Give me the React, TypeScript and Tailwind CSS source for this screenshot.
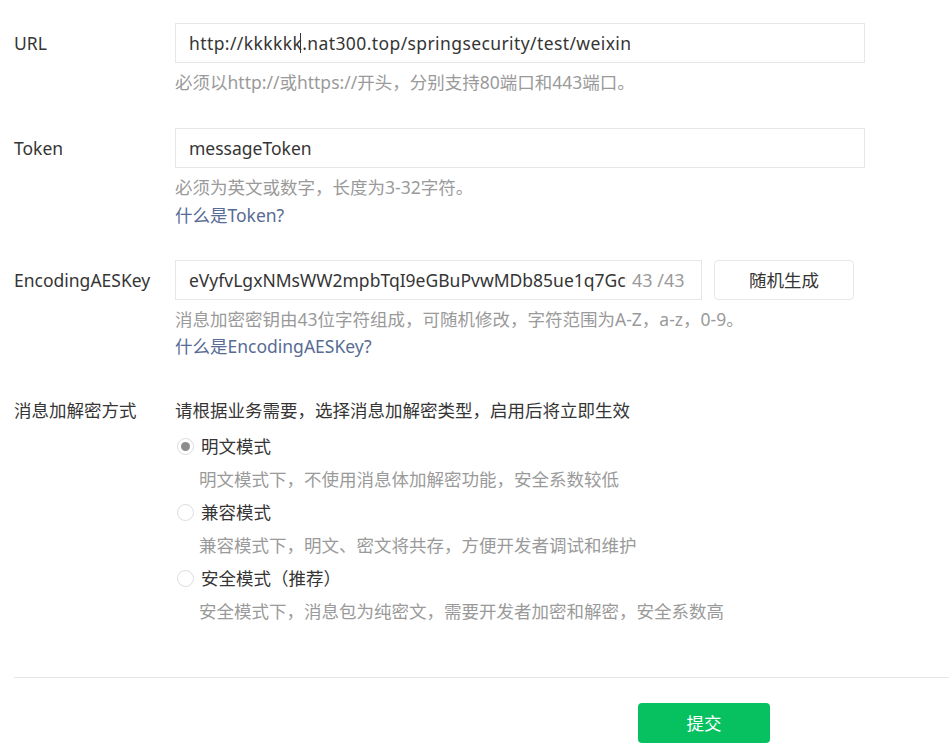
import React from "react";

const FONT = {
  fontFamily: '"Noto Sans", "Noto Sans CJK SC", sans-serif',
};

type Mode = {
  id: string;
  label: string;
  desc: string;
};

const modes: Mode[] = [
  {
    id: "plain",
    label: "明文模式",
    desc: "明文模式下，不使用消息体加解密功能，安全系数较低",
  },
  {
    id: "compat",
    label: "兼容模式",
    desc: "兼容模式下，明文、密文将共存，方便开发者调试和维护",
  },
  {
    id: "safe",
    label: "安全模式（推荐）",
    desc: "安全模式下，消息包为纯密文，需要开发者加密和解密，安全系数高",
  },
];

function Radio({ checked }: { checked: boolean }) {
  return (
    <span className="w-[17px] h-[17px] rounded-full border border-[#dcdcdc] bg-white flex items-center justify-center shrink-0">
      {checked && <span className="w-[9px] h-[9px] rounded-full bg-[#8c8c8c]" />}
    </span>
  );
}

function Label({ children }: { children: React.ReactNode }) {
  return (
    <div className="w-[161px] shrink-0 leading-[40px] text-[#353535]">
      {children}
    </div>
  );
}

export default function App() {
  const aesKey = "eVyfvLgxNMsWW2mpbTqI9eGBuPvwMDb85ue1q7Gcl3Y";

  return (
    <div className="bg-white min-h-[754px] text-[17.5px] pt-[23px] pl-[14px]" style={FONT}>
      {/* URL */}
      <div className="flex">
        <Label>URL</Label>
        <div>
          <div className="w-[690px] h-[40px] border border-[#e4e8eb] px-[13px] flex items-center text-[#353535] whitespace-nowrap tracking-[0.4px]">
            http://kkkkkk
            <span className="inline-block w-px h-[20px] bg-[#353535] -ml-[2px] mr-[1px]" />
            .nat300.top/springsecurity/test/weixin
          </div>
          <p className="mt-[5px] leading-[28px] text-[#9a9a9a]">
            必须以http://或https://开头，分别支持80端口和443端口。
          </p>
        </div>
      </div>

      {/* Token */}
      <div className="flex mt-[32px]">
        <Label>Token</Label>
        <div>
          <div className="w-[690px] h-[40px] border border-[#e4e8eb] px-[13px] flex items-center text-[#353535]">
            messageToken
          </div>
          <p className="mt-[5px] leading-[28px] text-[#9a9a9a]">
            必须为英文或数字，长度为3-32字符。
          </p>
          <a className="block leading-[28px] text-[#576b95]">什么是Token?</a>
        </div>
      </div>

      {/* EncodingAESKey */}
      <div className="flex mt-[31px]">
        <Label>EncodingAESKey</Label>
        <div>
          <div className="flex items-center gap-[12px]">
            <div className="w-[527px] h-[40px] border border-[#e4e8eb] pl-[13px] flex items-center">
              <input
                readOnly
                value={aesKey}
                className="w-[438px] bg-transparent outline-none text-[#353535]"
                style={FONT}
              />
              <span className="ml-[5px] text-[18px] text-[#9a9a9a] whitespace-nowrap">43 /43</span>
            </div>
            <button className="w-[140px] h-[40px] border border-[#e4e8eb] rounded-[4px] bg-white text-[#353535]">
              随机生成
            </button>
          </div>
          <p className="mt-[5px] leading-[28px] text-[#9a9a9a]">
            消息加密密钥由43位字符组成，可随机修改，字符范围为A-Z，a-z，0-9。
          </p>
          <a className="block leading-[27px] text-[#576b95]">什么是EncodingAESKey?</a>
        </div>
      </div>

      {/* 消息加解密方式 */}
      <div className="flex mt-[34px]">
        <div className="w-[161px] shrink-0 leading-[32px] text-[#353535]">消息加解密方式</div>
        <div>
          <p className="leading-[32px] text-[#353535]">
            请根据业务需要，选择消息加解密类型，启用后将立即生效
          </p>
          <div className="mt-[3px]">
            {modes.map((m) => (
              <div key={m.id}>
                <div className="flex items-center gap-[7px] h-[34px] pl-[2px]">
                  <Radio checked={m.id === "plain"} />
                  <span className="text-[#353535]">{m.label}</span>
                </div>
                <p className="pl-[24px] leading-[32px] text-[#9a9a9a]">{m.desc}</p>
              </div>
            ))}
          </div>
        </div>
      </div>

      {/* footer */}
      <div className="mt-[50px] border-t border-[#e6e6e6]" />
      <div className="pt-[25px] pl-[624px]">
        <button className="w-[132px] h-[40px] rounded-[4px] bg-[#07c160] text-white">
          提交
        </button>
      </div>
    </div>
  );
}
